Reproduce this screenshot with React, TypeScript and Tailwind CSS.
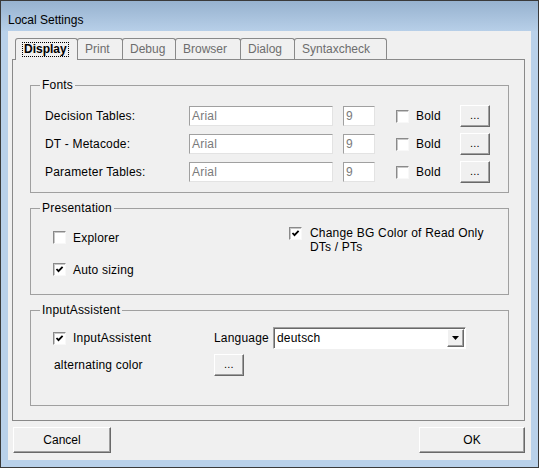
import React from "react";

function CheckBox({ checked }: { checked?: boolean }) {
  return (
    <span className="w-[13px] h-[13px] shrink-0 border border-t-[#8a8a8a] border-l-[#8a8a8a] border-r-[#f8f8f8] border-b-[#f8f8f8] bg-white shadow-[inset_1px_1px_0_#c8c8c8] flex items-center justify-center">
      {checked && (
        <svg width="9" height="9" viewBox="0 0 9 9">
          <path d="M1.5 4 L3.5 6.2 L7.6 1.8" fill="none" stroke="#000" strokeWidth="1.8" />
        </svg>
      )}
    </span>
  );
}

function Btn({ className, children }: { className: string; children: React.ReactNode }) {
  return (
    <div
      className={
        "bg-[#f0f0f0] border border-t-white border-l-white border-r-[#696969] border-b-[#696969] shadow-[inset_-1px_-1px_0_#a0a0a0] flex items-center justify-center text-black " +
        className
      }
    >
      {children}
    </div>
  );
}

function TextBox({ className, value }: { className: string; value: string }) {
  return (
    <div
      className={
        "h-[20px] border border-t-[#a0a0a0] border-l-[#a0a0a0] border-r-[#e3e3e3] border-b-[#e3e3e3] bg-white text-[#7a7a7a] pl-[2px] leading-[18px] " +
        className
      }
    >
      {value}
    </div>
  );
}

function FontRow({ label }: { label: string }) {
  return (
    <div className="flex items-center h-[22px]">
      <span className="w-[144px]">{label}</span>
      <TextBox className="w-[144px]" value="Arial" />
      <TextBox className="w-[32px] ml-[10px]" value="9" />
      <span className="ml-[21px]">
        <CheckBox />
      </span>
      <span className="ml-[7px] w-[44px]">Bold</span>
      <Btn className="w-[30px] h-[22px] text-[11px] leading-none pb-[2px]">...</Btn>
    </div>
  );
}

function Group({ title, className, children }: { title: string; className: string; children: React.ReactNode }) {
  return (
    <div className={"relative w-[479px] border border-[#a0a0a0] " + className}>
      <span className="absolute left-[9px] top-[-9px] px-[2px] bg-[#f0f0f0] leading-[16px]">{title}</span>
      {children}
    </div>
  );
}

const tabs: [string, number][] = [
  ["Print", 46],
  ["Debug", 54],
  ["Browser", 66],
  ["Dialog", 55],
  ["Syntaxcheck", 93],
];

export default function App() {
  return (
    <div className="w-[539px] h-[468px] border border-[#3a3a3a] bg-[#b9d1ea] flex flex-col font-['Liberation_Sans',Arial,sans-serif] text-[12px] text-black">
      <div className="h-[30px] shrink-0 bg-gradient-to-b from-[#97b2cf] to-[#b7cfe8] flex items-start pl-[7px] pt-[12px] leading-[14px]">
        Local Settings
      </div>
      <div className="mx-[7px] h-[429px] bg-[#f0f0f0] flex flex-col">
        {/* tabs */}
        <div className="relative z-10 flex items-start mt-[7px] ml-[7px] h-[22px]">
          <div className="w-[63px] h-[22px] bg-[#f0f0f0] border border-b-0 border-[#898989] rounded-t-[3px] flex items-start pt-[4px] pl-[7px]">
            <span className="font-bold outline outline-1 outline-dotted outline-black px-[1px] leading-[13px]">Display</span>
          </div>
          {tabs.map(([t, w]) => (
            <div
              key={t}
              className="-ml-px h-[21px] border border-b-0 border-[#898989] rounded-t-[3px] flex items-center pl-[7px] text-[#6d6d6d]"
              style={{ width: w }}
            >
              {t}
            </div>
          ))}
        </div>
        {/* panel */}
        <div className="-mt-px ml-[4px] w-[513px] h-[362px] border border-[#898989] pl-[17px] pt-[25px] tracking-[0.2px]">
          <Group title="Fonts" className="h-[108px] pl-[14px] pt-[19px]">
            <div className="flex flex-col gap-[6px]">
              <FontRow label="Decision Tables:" />
              <FontRow label="DT - Metacode:" />
              <FontRow label="Parameter Tables:" />
            </div>
          </Group>
          <Group title="Presentation" className="mt-[15px] h-[87px] pl-[22px] pt-[22px] flex">
            <div className="w-[236px] flex flex-col">
              <div className="flex items-center h-[13px] gap-[7px]">
                <CheckBox />
                <span>Explorer</span>
              </div>
              <div className="flex items-center h-[13px] gap-[7px] mt-[19px]">
                <CheckBox checked />
                <span>Auto sizing</span>
              </div>
            </div>
            <div className="flex items-start -mt-[4px]">
              <CheckBox checked />
              <span className="ml-[8px] leading-[14px] -mt-[1px]">
                Change BG Color of Read Only
                <br />
                DTs / PTs
              </span>
            </div>
          </Group>
          <Group title="InputAssistent" className="mt-[15px] h-[96px] pl-[22px] pt-[16px]">
            <div className="flex items-center h-[22px]">
              <div className="w-[161px] flex items-center gap-[7px]">
                <CheckBox checked />
                <span>InputAssistent</span>
              </div>
              <span className="w-[59px]">Language</span>
              <div className="w-[193px] h-[22px] border border-t-[#a0a0a0] border-l-[#a0a0a0] border-r-white border-b-white bg-white shadow-[inset_1px_1px_0_#696969] flex items-center">
                <span className="flex-1 pl-[3px]">deutsch</span>
                <div className="w-[17px] h-[18px] mr-px bg-[#f0f0f0] border border-t-white border-l-white border-r-[#696969] border-b-[#696969] shadow-[inset_-1px_-1px_0_#a0a0a0] flex items-center justify-center">
                  <svg width="7" height="4" viewBox="0 0 7 4">
                    <path d="M0 0 H7 L3.5 4 Z" fill="#000" />
                  </svg>
                </div>
              </div>
            </div>
            <div className="flex items-center h-[22px] mt-[5px]">
              <span className="w-[160px] ml-px">alternating color</span>
              <Btn className="w-[30px] h-[22px] text-[11px] leading-none pb-[2px]">...</Btn>
            </div>
          </Group>
        </div>
        {/* buttons */}
        <div className="mt-[6px] flex justify-between pl-[5px] pr-[6px]">
          <Btn className="w-[98px] h-[26px]">Cancel</Btn>
          <Btn className="w-[106px] h-[26px]">OK</Btn>
        </div>
      </div>
    </div>
  );
}
